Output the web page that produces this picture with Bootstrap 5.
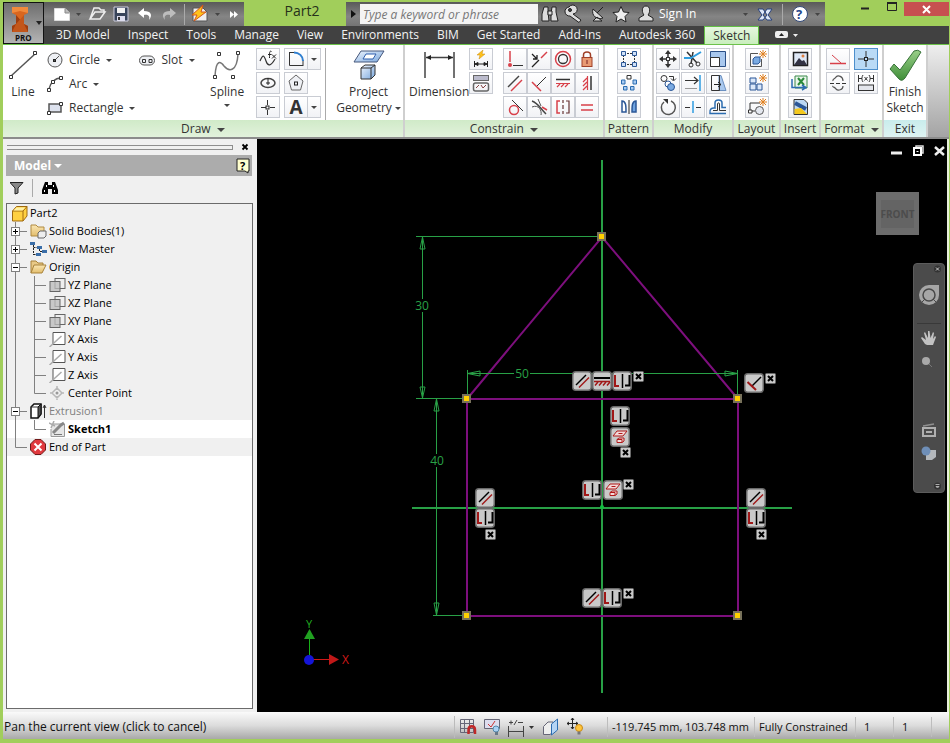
<!DOCTYPE html>
<html lang="en">
<head>
<meta charset="utf-8">
<meta name="viewport" content="width=device-width, initial-scale=1">
<title>Part2</title>
<link href="https://cdn.jsdelivr.net/npm/bootstrap@5.3.0/dist/css/bootstrap.min.css" rel="stylesheet">
<script src="https://cdn.jsdelivr.net/npm/bootstrap@5.3.0/dist/js/bootstrap.bundle.min.js"></script>
<style>
body{background:#a1ce5b;font-family:"Open Sans","Noto Sans",sans-serif;font-size:12px;line-height:16px;color:#333}
button,a.nav-link{font:inherit;color:inherit}
button{border:0;background:none;padding:0}
svg{display:block;flex:none;fill:none}
.win{height:100vh;padding:2px 1px 4px 3px}
.app-btn{width:41px;height:42px;border:1px solid #111;background:linear-gradient(#6e6e6e,#b4b4b4)}
.bar-grey{height:24px;background:linear-gradient(#595959,#858585 60%,#747474);color:#fff}
.title-txt{font-size:14px;line-height:18px;color:#26311a;width:102px;padding-left:14px}
.search-box{width:178px;height:20px;border:0;border-radius:0;padding:2px 3px;font-size:12px;font-style:italic;background:#f4f4f4;color:#777}
.search-box::placeholder{color:#777}
.sign-in{padding:0 2px}
.vline{width:1px;height:18px;background:#aaa}
.close-btn{width:45px;height:14px;background:#c75050}
.tabs{height:18px;background:#414141;color:#f2f2f2}
.tabs .nav-link{padding:0 9px;color:#f2f2f2;line-height:17px}
.tabs .nav-link.active{background:linear-gradient(#e6f6df,#c9eebd);color:#333;border:1px solid #63bf45;border-bottom:0}
.tabs .nav-link:first-child{margin-left:3px}
.ribbon{height:95px;background:linear-gradient(#eee,#a4a4a4);border-top:1px solid #6cc24a;border-bottom:2px solid #8c8c8c}
.pane{background:#fff;border-right:2px solid #cfcfcf;flex:none}
.pane-draw{width:402px}
.pane-constrain{width:200px}
.pane-pattern{width:49px}
.pane-modify{width:80px}
.pane-layout{width:47px}
.pane-insert{width:40px}
.pane-format{width:63px}
.pane-exit{width:44px}
.pane-body{height:75px;padding-top:3px}
.pane-lbl{height:17px;line-height:17px;background:linear-gradient(#d0eac8,#e2f2dc);white-space:nowrap;text-align:center}
.exit-lbl{background:linear-gradient(#c9ecec,#dff4f2)}
.ib{width:24px;height:22px;border:1px solid #c9ccd3;background:linear-gradient(#fff,#f1f2f5);display:flex;align-items:center;justify-content:center}
.ib-split{width:13px;border-left:0}
.ib-on{background:#b9daf6;border-color:#4d8fcc}
.ib-text{font-size:19px}
.ig{display:grid;gap:2px;grid-auto-rows:22px;align-content:start}
.ig2{grid-template-columns:repeat(3,24px);gap:2px 1px}
.ig4{grid-template-columns:repeat(4,24px);gap:2px 0}
.txt-btn{height:24px;display:flex;align-items:center;gap:6px;white-space:nowrap}
.big-btn{display:flex;flex-direction:column;align-items:center;white-space:nowrap;line-height:16px}
.geo-btn{margin:0 2px 0 10px}
.car{border:3px solid transparent;border-top-color:#444;border-bottom:0;display:inline-block;vertical-align:middle}
.car-lg{border-width:4px;border-bottom:0}
.car-white{border-top-color:#fff}
.side{width:254px;background:#f0f0f0;font-size:11px;color:#000}
.grip{height:5px;border:1px solid #8e8e8e;border-left:0}
.model-hd{height:21px;background:#acacac;color:#fff;font-size:12px;padding:0 2px 0 8px;margin:0 5px 0 3px}
.side-tools{height:27px;padding:0 7px 4px}
.tree{background:#fff;border:1px solid #6b6b6b;margin:0 4px 3px 3px}
.tree-row{height:18px;display:flex;align-items:center;background:#f0f0f0;white-space:nowrap}
.tree-row.sel{background:#fff;font-weight:700}
.tree-row.dim{color:#808080}
.gd{width:23px;height:18px}
.gd2{width:19px;height:18px}
.tree-row>.ic{margin-right:2px}
.view{background:#000;border-right:2px solid #e8f0dc}
.view>svg{width:100%;height:100%}
.overlay{position:absolute}
.win-ctl{top:6px;right:2px;gap:10px}
.cube{top:53px;right:28px;width:43px;height:43px;background:#6c6c6c;color:#4c4c4c;font-size:10px;font-weight:700}
.cube span{background:#646464;padding:6px 0}
.navbar-v{top:124px;right:2px;width:32px;height:230px;background:#4b4b4b;border:1px solid #5c5c5c;border-radius:4px}
.status{height:27px;background:linear-gradient(#fafafa,#dcdcdc 50%,#a8a8a8);color:#111;padding:2px 0 0 1px}
.cell{border-left:1px solid #bdbdbd;height:20px;line-height:20px;padding-left:4px;font-size:11px;white-space:nowrap}
.cell-pos{width:147px}
.cell-state{width:101px}
.cell-num{width:38px;padding-left:8px}
.cell-end{width:18px}
</style>
</head>
<body>
<svg width="0" height="0" class="position-absolute" aria-hidden="true">
<defs>
<linearGradient id="gBlue" x2="1" y2="1"><stop stop-color="#eef5ff"/><stop offset="1" stop-color="#7aa7dc"/></linearGradient>
<linearGradient id="gGreen" x2="0" y2="1"><stop stop-color="#9ad089"/><stop offset="1" stop-color="#3f8e38"/></linearGradient>
<linearGradient id="gFold" x2="0" y2="1"><stop stop-color="#fbe7b4"/><stop offset="1" stop-color="#e2bd6c"/></linearGradient>
<symbol id="plus" viewBox="0 0 23 18"><path d="M8.500 0V18M13 9.500H20" stroke="#808080"/><rect x="4.500" y="5.500" width="8" height="8" fill="#fff" stroke="#808080"/><path d="M6 9.500H11M8.500 7V12" stroke="#000"/></symbol>
<symbol id="minus" viewBox="0 0 23 18"><path d="M8.500 0V18M13 9.500H20" stroke="#808080"/><rect x="4.500" y="5.500" width="8" height="8" fill="#fff" stroke="#808080"/><path d="M6 9.500H11" stroke="#000"/></symbol>
<symbol id="vert" viewBox="0 0 23 18"><path d="M8.500 0V18" stroke="#808080"/></symbol>
<symbol id="elbow" viewBox="0 0 23 18"><path d="M8.500 0V9.500H20" stroke="#808080"/></symbol>
<symbol id="tee2" viewBox="0 0 19 18"><path d="M4.500 0V18M5 9.500H16" stroke="#808080"/></symbol>
<symbol id="elbow2" viewBox="0 0 19 18"><path d="M4.500 0V9.500H16" stroke="#808080"/></symbol>
<symbol id="plane" viewBox="0 0 16 16"><rect x="5.500" y="1.500" width="10" height="10" fill="#eee" stroke="#666"/><rect x=".5" y="4.500" width="10" height="10" fill="#bbb" fill-opacity=".75" stroke="#666"/></symbol>
<symbol id="axis" viewBox="0 0 16 16"><path d="M3.500 1.500H15.500V13.500H3.500Z" fill="#fff" stroke="#555"/><path d="M0 16L12 5" stroke="#aaa" stroke-width="1.500"/></symbol>
<symbol id="b-par" viewBox="0 0 20 20"><rect x=".75" y=".75" width="18.500" height="18.500" rx="3" fill="#c9c9c9" stroke="#6a6a6a" stroke-width="1.500"/><path d="M4 14L14 4" stroke="#000" stroke-width="1.500"/><path d="M7 16.500L17 6.500" stroke="#a01818" stroke-width="1.500"/></symbol>
<symbol id="b-sym" viewBox="0 0 20 20"><rect x=".75" y=".75" width="18.500" height="18.500" rx="3" fill="#c9c9c9" stroke="#6a6a6a" stroke-width="1.500"/><path d="M3 4V15H7" stroke="#a01818" stroke-width="2"/><path d="M10.500 3V17" stroke="#000" stroke-width="1.500"/><path d="M17.500 4V14.500H13" stroke="#000" stroke-width="2"/></symbol>
<symbol id="b-hor" viewBox="0 0 20 20"><rect x=".75" y=".75" width="18.500" height="18.500" rx="3" fill="#c9c9c9" stroke="#6a6a6a" stroke-width="1.500"/><path d="M2 7H18" stroke="#000" stroke-width="2"/><path d="M2 10.500H18M6 11L3 14.500M10 11L7 14.500M14 11L11 14.500M18 11L15 14.500" stroke="#a01818" stroke-width="1.500"/></symbol>
<symbol id="b-prp" viewBox="0 0 20 20"><rect x=".75" y=".75" width="18.500" height="18.500" rx="3" fill="#c9c9c9" stroke="#6a6a6a" stroke-width="1.500"/><path d="M8 13L17 4" stroke="#000" stroke-width="1.500"/><path d="M3.500 9L12 17" stroke="#a01818" stroke-width="2"/></symbol>
<symbol id="b-prj" viewBox="0 0 20 20"><rect x=".75" y=".75" width="18.500" height="18.500" rx="3" fill="#c9c9c9" stroke="#6a6a6a" stroke-width="1.500"/><path d="M7 4H17L13 9H3Z" fill="#f3dada" stroke="#b01818"/><path d="M8.500 6.500H12.500" stroke="#b01818"/><path d="M7 12.500L9 11H14V14L12 15.500H7ZM7 12.500H12V15.500" fill="#f3dada" stroke="#b01818"/></symbol>
<symbol id="b-x" viewBox="0 0 11 11"><rect x=".5" y=".5" width="10" height="10" rx="1" fill="#c9c9c9" stroke="#6a6a6a"/><path d="M3 3L8 8M8 3L3 8" stroke="#000" stroke-width="2"/></symbol>
<symbol id="pt" viewBox="0 0 9 9"><rect x="1" y="1" width="7" height="7" fill="#ffd000" stroke="#77715a" stroke-width="2"/></symbol>
<symbol id="burst" viewBox="0 0 8 8"><path d="M4 0V8M0 4H8M1 1L7 7M7 1L1 7" stroke="#e08020"/></symbol>
</defs>
</svg>

<div class="win d-flex flex-column">
<header class="d-flex">
  <button class="app-btn d-flex align-items-center justify-content-center" aria-label="Application menu">
    <svg width="38" height="38" viewBox="0 0 38 38"><path d="M7 3H23V9L19 11V20L23 22V28H7V22L11 20V11L7 9Z" fill="#d9661f"/><path d="M7 3H23V9L15 7L7 9Z" fill="#f08a3c"/><path d="M11 11L19 20L23 22V28H7V22L11 20Z" fill="#9c3d10"/><path d="M11 20L19 11V20L23 28H7Z" fill="#c3561a"/><path d="M31 17H37L34 21Z" fill="#222"/><text x="10" y="37" font-size="8" font-weight="700" fill="#111">PRO</text></svg>
  </button>
  <div class="flex-grow-1 d-flex flex-column">
    <div class="d-flex">
      <div class="bar-grey d-flex align-items-center ps-2">
        <svg width="192" height="24" viewBox="52 2 192 24"><path d="M54.500 8.500H65L69.500 13V20.500H54.500Z" fill="#fff" stroke="#ddd"/><path d="M65 8.500V13H69.500" fill="#bbb" stroke="#888"/><path d="M76 13H81L78.500 16Z" fill="#444"/><path d="M90 19L94 8H99L101 10H104V12M90 19L95 12H105L100 19Z" stroke="#eee" stroke-width="1.500" fill="#777"/><path d="M114 7H128V21H114Z" fill="#38445a" stroke="#ccd"/><path d="M117 8H125V13H117Z" fill="#f2f2f2"/><path d="M117 16H125V21H117Z" fill="#dde"/><path d="M119 17V20" stroke="#333" stroke-width="2"/><path d="M144 8L138 13L144 18V15C149 14 150 17 149 20C153 15 151 11 144 11Z" fill="#fff"/><path d="M170 8L176 13L170 18V15C165 14 164 17 165 20C161 15 163 11 170 11Z" fill="#bdbdbd"/><path d="M184.500 4V25" stroke="#aaa"/><path d="M193 8H203L207 12V21H193Z" fill="#eee" stroke="#555"/><path d="M203 5L192 15H197L194 21L206 12H201Z" fill="#ffc21a" stroke="#d1571a"/><path d="M215 13H220L217.500 16Z" fill="#444"/><path d="M230 11L234 14.500L230 18ZM234 11L238 14.500L234 18Z" fill="#fff"/></svg>
      </div>
      <div class="title-txt text-center">Part2</div>
      <div class="bar-grey d-flex align-items-center">
        <button class="px-1" aria-label="Collapse search"><svg width="6" height="10"><path d="M1 1L6 5L1 9Z" fill="#111"/></svg></button>
        <input class="search-box" aria-label="Search" placeholder="Type a keyword or phrase">
        <svg width="119" height="24" viewBox="539 2 119 24"><g fill="#ddd" stroke="#222"><path d="M545 7H549V12L550 21H543V14ZM553 7H557V12L559 21H552V14Z"/><path d="M549 11H553V15H549Z"/><path d="M570 7A4.500 4.500 0 1 1 574 14L582 20L580 22.500L571 16A4.500 4.500 0 0 1 570 7Z"/><circle cx="571" cy="10" r="1.500" fill="#444"/><path d="M594 9L604 18C598 20 592 16 594 9ZM598 13L604 7M594 21H603L598 17Z"/><path d="M622 6.500L624.500 12L630 12.500L626 16.500L627 22L622 19L617 22L618 16.500L614 12.500L619.500 12Z" fill="#eee"/><path d="M647 6C652 6 651 13 649 15L654 18V21H640V18L645 15C643 13 642 6 647 6Z" fill="#ddd"/></g></svg>
        <button class="sign-in text-white">Sign In</button>
        <svg width="127" height="24" viewBox="700 2 127 24"><path d="M745 13H750L747.500 16Z" fill="#444"/><path d="M760 9H765L769 15L765 20H760L764 15ZM774 9H769L765 15L769 20H774L770 15Z" fill="#dfe8f8" stroke="#27407c"/><path d="M784.500 4V25" stroke="#aaa"/><circle cx="802" cy="14" r="7.500" fill="#fff" stroke="#334a7a"/><text x="798" y="19" font-size="13" font-weight="700" fill="#24468c">?</text><path d="M817 13H822L819.500 16Z" fill="#444"/></svg>
      </div>
      <div class="flex-grow-1 d-flex justify-content-end align-items-start">
        <svg width="43" height="14" viewBox="0 0 43 14"><path d="M0 6.500H8" stroke="#222" stroke-width="2"/><path d="M26.500 .5H35.500V8.500H26.500Z" stroke="#222"/><path d="M26 1H36" stroke="#222" stroke-width="2"/></svg>
        <button class="close-btn d-flex align-items-center justify-content-center" aria-label="Close"><svg width="9" height="9"><path d="M1 1L8 8M8 1L1 8" stroke="#fff" stroke-width="2"/></svg></button>
      </div>
    </div>
    <nav class="tabs nav flex-nowrap" aria-label="Ribbon">
      <a class="nav-link" href="#">3D Model</a><a class="nav-link" href="#">Inspect</a><a class="nav-link" href="#">Tools</a><a class="nav-link" href="#">Manage</a><a class="nav-link" href="#">View</a><a class="nav-link" href="#">Environments</a><a class="nav-link" href="#">BIM</a><a class="nav-link" href="#">Get Started</a><a class="nav-link" href="#">Add-Ins</a><a class="nav-link" href="#">Autodesk 360</a><a class="nav-link active px-2" href="#">Sketch</a>
      <svg class="ms-3" width="24" height="18"><rect x="0" y="5" width="13" height="7" rx="2" fill="#eee"/><path d="M4 10H9L6.500 7Z" fill="#222"/><path d="M18 8H23L20.500 11Z" fill="#eee"/></svg>
    </nav>
  </div>
</header>

<section class="ribbon d-flex" aria-label="Sketch tools">
  <div class="pane pane-draw">
    <div class="pane-body d-flex">
      <button class="big-btn ms-1"><svg width="32" height="36" viewBox="8 48 32 36"><path d="M12 76L36 54" stroke="#555" stroke-width="1.500"/><path d="M10.500 75.500H13.500V78.500H10.500ZM34.500 51.500H37.500V54.500H34.500Z" fill="#fff" stroke="#333"/></svg>Line</button>
      <div class="ms-2">
        <button class="txt-btn"><svg width="16" height="16"><circle cx="8" cy="8" r="7" fill="#eef0f4" stroke="#555"/><path d="M7 9L12 4" stroke="#555"/><rect x="6.500" y="7.500" width="2" height="2" stroke="#222"/></svg>Circle <i class="car"></i></button>
        <button class="txt-btn"><svg width="16" height="16"><path d="M2 13C3 7 8 2 14 2" stroke="#555" stroke-width="1.500"/><path d="M.5 12.500H3.500V15.500H.5ZM4.500 4.500H7.500V7.500H4.500ZM12.500 .5H15.500V3.500H12.500Z" fill="#fff" stroke="#333"/></svg>Arc <i class="car"></i></button>
        <button class="txt-btn"><svg width="16" height="16"><path d="M2 4H14V12H2Z" fill="#dde2ee" stroke="#555" stroke-width="1.500"/><path d="M.5 11.500H3.500V14.500H.5ZM12.500 2.500H15.500V5.500H12.500Z" fill="#fff" stroke="#333"/></svg>Rectangle <i class="car"></i></button>
      </div>
      <div><button class="txt-btn ms-1"><svg width="16" height="16"><rect x=".5" y="4" width="15" height="9" rx="4.500" fill="#eef0f4" stroke="#555"/><path d="M3.500 7.500H6.500V10.500H3.500ZM10 7.500H13V10.500H10Z" stroke="#333"/></svg>Slot <i class="car"></i></button></div>
      <button class="big-btn ms-auto"><svg width="32" height="36" viewBox="211 48 32 36"><path d="M215 76C216 58 221 62 224 66C229 72 237 72 238 54" stroke="#777" stroke-width="1.500"/><path d="M213.500 75.500H216.500V78.500H213.500ZM217.500 52.500H220.500V55.500H217.500ZM231.500 75.500H234.500V78.500H231.500ZM236.500 51.500H239.500V54.500H236.500Z" fill="#fff" stroke="#333"/></svg>Spline<i class="car mt-1"></i></button>
      <div class="ig ms-2 ps-1">
        <div class="d-flex"><button class="ib" aria-label="Equation curve"><svg width="20" height="18"><path d="M2 11C5 4 6 5 8 11S13 16 17 9" stroke="#333" stroke-width="1.200"/><path d="M13.500 1.500C11.500 .5 11.500 2 11.500 8M10 4.500H13.500M14 4.500L18 8.500M18 4.500L14 8.500" stroke="#222"/></svg></button><button class="ib ms-1" aria-label="Fillet"><svg width="20" height="18"><path d="M3.500 2V15.500H17M3 2.500H8M17 10V16" stroke="#333"/><path d="M8 2.500C13 2.500 17 6 17 11" stroke="#2f7fd0" stroke-width="2"/></svg></button><button class="ib ib-split" aria-label="More fillets"><i class="car"></i></button></div>
        <div class="d-flex"><button class="ib" aria-label="Ellipse"><svg width="20" height="18"><ellipse cx="10" cy="9" rx="7" ry="4.500" stroke="#444" stroke-width="1.500"/><path d="M8 9H12M10 4V11" stroke="#222"/></svg></button><button class="ib ms-1" aria-label="Polygon"><svg width="20" height="18"><path d="M10 1L17 7L14.500 16H5.500L3 7Z" fill="#eef0f4" stroke="#666"/><rect x="8.500" y="8" width="3" height="3" stroke="#222"/></svg></button></div>
        <div class="d-flex"><button class="ib" aria-label="Point"><svg width="20" height="18"><path d="M3 9.500H8M12 9.500H17M9.500 2V7M9.500 12V17" stroke="#333"/><rect x="8" y="8" width="3" height="3" stroke="#222"/></svg></button><button class="ib ib-text ms-1 fw-bold">A</button><button class="ib ib-split" aria-label="More text"><i class="car"></i></button></div>
      </div>
      <div class="vline ms-1 h-100"></div>
      <button class="big-btn geo-btn"><svg width="34" height="36" viewBox="0 0 34 36"><path d="M9 3H32L25 14H2Z" fill="url(#gBlue)" stroke="#46587c"/><path d="M14 6H24L21 11H11Z" fill="#fff" stroke="#2f5fae"/><path d="M9 20L13 17H23V27L19 31H9ZM9 20H19V31M19 20L23 17" fill="url(#gBlue)" stroke="#333"/></svg>Project<span>Geometry <i class="car"></i></span></button>
    </div>
    <div class="pane-lbl">Draw &nbsp;<i class="car car-lg"></i></div>
  </div>
  <div class="pane pane-constrain">
    <div class="pane-body d-flex">
      <button class="big-btn ms-1"><svg width="34" height="36" viewBox="0 0 34 36"><path d="M3 4V30M32 4V30M4 9.500H31" stroke="#444" stroke-width="1.500"/><path d="M4 9.500L9 7V12ZM31 9.500L26 7V12Z" fill="#222"/></svg>Dimension</button>
      <div class="ig">
        <button class="ib" aria-label="Auto dimension"><svg width="20" height="18"><path d="M12 0L6 5H9L8 9L14 4H11Z" fill="#ffc21a" stroke="#c98a10" stroke-width=".5"/><path d="M3.500 11V17M16.500 11V17M4 14H16M4 14L7 12.500V15.500ZM16 14L13 12.500V15.500Z" fill="#222" stroke="#222"/></svg></button>
        <button class="ib" aria-label="Show constraints"><svg width="20" height="18"><rect x="2.500" y="1.500" width="15" height="5" fill="#bbc" stroke="#666"/><rect x="2.500" y="9" width="15" height="8" rx="2" stroke="#666" stroke-width="1.500"/><path d="M5 14L8 11M10 11L12 14L15 11" stroke="#844"/></svg></button>
      </div>
      <div class="ig ig4 ms-auto me-1">
        <button class="ib" aria-label="Coincident"><svg width="20" height="18"><path d="M5 1V12" stroke="#d8404a" stroke-width="1.500"/><path d="M8 15.500H18" stroke="#333"/><circle cx="5" cy="15" r="2" fill="#d8404a"/></svg></button>
        <button class="ib" aria-label="Collinear"><svg width="20" height="18"><path d="M3 17L10 10M3 4L8 9M8 5V9H4" stroke="#222" stroke-width="1.300"/><path d="M12 8L18 2" stroke="#d8404a" stroke-width="1.500"/></svg></button>
        <button class="ib" aria-label="Concentric"><svg width="20" height="18"><circle cx="10" cy="9" r="7.500" stroke="#d8404a" stroke-width="1.500"/><circle cx="10" cy="9" r="4.500" stroke="#333" stroke-width="1.300"/></svg></button>
        <button class="ib" aria-label="Fix"><svg width="20" height="18"><path d="M6.500 8V5C6.500 1 13.500 1 13.500 5V8" stroke="#a04028" stroke-width="1.500"/><rect x="5" y="7.500" width="10" height="9" fill="#e89a74" stroke="#a04028"/><path d="M10 10V14" stroke="#722"/></svg></button>
        <button class="ib" aria-label="Parallel"><svg width="20" height="18"><path d="M3 13L14 2" stroke="#444" stroke-width="1.500"/><path d="M6 17L17 6" stroke="#d8404a" stroke-width="1.500"/></svg></button>
        <button class="ib" aria-label="Perpendicular"><svg width="20" height="18"><path d="M8 12L17 3" stroke="#333"/><path d="M3 8L12 17" stroke="#d8404a" stroke-width="1.500"/></svg></button>
        <button class="ib" aria-label="Horizontal"><svg width="20" height="18"><path d="M3 5.500H17" stroke="#333" stroke-width="1.500"/><path d="M3 9.500H17M7 10L4 13M11 10L8 13M15 10L12 13" stroke="#d8404a" stroke-width="1.200"/></svg></button>
        <button class="ib" aria-label="Vertical"><svg width="20" height="18"><path d="M14 2V16" stroke="#333" stroke-width="1.500"/><path d="M10.500 2V16M10 4L6 8M10 8L6 12M10 12L6 16" stroke="#d8404a" stroke-width="1.200"/></svg></button>
        <button class="ib" aria-label="Tangent"><svg width="20" height="18"><circle cx="9" cy="12" r="4.500" stroke="#d8404a" stroke-width="1.500"/><path d="M7 2L18 13" stroke="#333"/></svg></button>
        <button class="ib" aria-label="Smooth"><svg width="20" height="18"><path d="M3 3C9 5 11 10 17 16" stroke="#444" stroke-width="1.500"/><path d="M3 9C10 6 13 13 12 17M9 1L12 8" stroke="#555"/><path d="M13 9L18 12" stroke="#d8404a" stroke-width="1.500"/></svg></button>
        <button class="ib" aria-label="Symmetric"><svg width="20" height="18"><path d="M7 3H4V15H7" stroke="#d8404a" stroke-width="1.500"/><path d="M10 2V5M10 7V11M10 13V16M13 3H16V15H13" stroke="#633" stroke-width="1.200"/></svg></button>
        <button class="ib" aria-label="Equal"><svg width="20" height="18"><path d="M4 7H16M4 12H16" stroke="#d8404a" stroke-width="1.500"/></svg></button>
      </div>
    </div>
    <div class="pane-lbl">Constrain &nbsp;<i class="car car-lg"></i></div>
  </div>
  <div class="pane pane-pattern">
    <div class="pane-body ig justify-content-center">
      <button class="ib" aria-label="Rectangular pattern"><svg width="20" height="18"><path d="M5 3.500H15M5 14.500H15M4.500 5V13M15.500 5V13" stroke="#333" stroke-dasharray="2 1"/><path d="M2.500 1.500H6.500V5.500H2.500ZM13.500 1.500H17.500V5.500H13.500ZM2.500 12.500H6.500V16.500H2.500ZM13.500 12.500H17.500V16.500H13.500Z" fill="#cfe0f7" stroke="#2b5797"/></svg></button>
      <button class="ib" aria-label="Circular pattern"><svg width="20" height="18"><path d="M8 1.500H12V5H8Z" fill="#fff" stroke="#333"/><path d="M2.500 6H6V10H2.500ZM14 6H17.500V10H14ZM4.500 12.500H8V16H4.500ZM11.500 12.500H15V16H11.500Z" fill="#a9cbf2" stroke="#2b6cb0"/></svg></button>
      <button class="ib" aria-label="Mirror"><svg width="20" height="18"><path d="M3 3C7 3 7 8 7 14H3Z" fill="#fff" stroke="#2b5797" stroke-width="1.500"/><path d="M10 2V16" stroke="#222"/><path d="M17 3C13 3 13 8 13 14H17Z" fill="#6fa3e0" stroke="#2b5797" stroke-width="1.500"/></svg></button>
    </div>
    <div class="pane-lbl">Pattern</div>
  </div>
  <div class="pane pane-modify">
    <div class="pane-body ig ig2 justify-content-center">
      <button class="ib" aria-label="Move"><svg width="20" height="18"><path d="M10 0L13 4H7ZM10 18L13 14H7ZM1 9L5 6V12ZM19 9L15 6V12Z" fill="#333"/><path d="M10 4V7M10 11V14M5 9H8M12 9H15" stroke="#333" stroke-width="1.500"/><rect x="8.500" y="7.500" width="3" height="3" stroke="#333"/></svg></button>
      <button class="ib" aria-label="Trim"><svg width="20" height="18"><path d="M4 2L14 13M10 2L8 14" stroke="#333" stroke-width="1.500"/><circle cx="15" cy="14" r="2" stroke="#333"/><circle cx="8" cy="15" r="2" stroke="#333"/><path d="M1 8H8L18 2" stroke="#2f9de0" stroke-width="2"/></svg></button>
      <button class="ib" aria-label="Scale"><svg width="20" height="18"><path d="M2.500 1.500H17.500V16.500H2.500Z" fill="#a9c8ee" stroke="#2b4f86"/><path d="M2.500 7.500H11.500V16.500H2.500Z" fill="#fff" stroke="#333"/></svg></button>
      <button class="ib" aria-label="Copy"><svg width="20" height="18"><circle cx="6" cy="4.500" r="3" stroke="#333"/><circle cx="10" cy="10" r="3" fill="#fff" stroke="#2b5797"/><circle cx="13" cy="13" r="3.500" fill="#7aaae2" stroke="#2b5797"/><path d="M11 2.500H15.500V6M13 4.500L15.500 7L18 4.500" stroke="#333"/></svg></button>
      <button class="ib" aria-label="Extend"><svg width="20" height="18"><path d="M2 6.500H14M11 3L15 6.500L11 10" stroke="#333" stroke-width="1.200"/><path d="M17 1V17" stroke="#2f9de0" stroke-width="1.500"/><path d="M2 14.500H14" stroke="#999"/></svg></button>
      <button class="ib" aria-label="Stretch"><svg width="20" height="18"><path d="M11 1.500H13L18 16.500H11Z" fill="#a9c8ee" stroke="#6a8fc0"/><path d="M3.500 1.500H11.500V16.500H3.500Z" stroke="#333"/><path d="M6 10.500H13M10 8L13 10.500L10 13" stroke="#222"/></svg></button>
      <button class="ib" aria-label="Rotate"><svg width="20" height="18"><path d="M6 4A7 7 0 1 0 13 3" stroke="#555" stroke-width="1.500"/><path d="M5 1H10V6Z" fill="#333"/></svg></button>
      <button class="ib" aria-label="Split"><svg width="20" height="18"><path d="M2 9.500H7M13 9.500H18" stroke="#333" stroke-width="1.200"/><path d="M10 3V15" stroke="#2f9de0" stroke-width="1.500"/></svg></button>
      <button class="ib" aria-label="Offset"><svg width="20" height="18"><path d="M18 15.500H2C1 11 4 9.500 7 10V5C7 1 14 1 14 5V9.500H18" stroke="#2b6cb0" stroke-width="1.500"/><path d="M18 12.500H11.500V6C11.500 4.500 9.500 4.500 9.500 6V12.500H5" stroke="#333"/></svg></button>
    </div>
    <div class="pane-lbl">Modify</div>
  </div>
  <div class="pane pane-layout">
    <div class="pane-body ig justify-content-center">
      <button class="ib" aria-label="Make part"><svg width="20" height="18"><path d="M11 3.500H3.500V16.500H14.500V9" stroke="#555"/><path d="M6 9L8 7H13V12L11 14H6Z" fill="#7aaae2" stroke="#2b5797"/><use href="#burst" x="12" y="0" width="8" height="8"/></svg></button>
      <button class="ib" aria-label="Make components"><svg width="20" height="18"><path d="M3 4H9V9H3ZM3 10H9V16H3ZM10 10H15V16H10Z" fill="#dbe8fa" stroke="#2b5797"/><use href="#burst" x="12" y="0" width="8" height="8"/></svg></button>
      <button class="ib" aria-label="Create block"><svg width="20" height="18"><path d="M13 5H3V13H8" stroke="#333"/><circle cx="12.500" cy="12.500" r="4" fill="#e4e8f0" stroke="#555"/><path d="M1.500 12H5V15H1.500Z" fill="#fff" stroke="#333"/><use href="#burst" x="12" y="0" width="8" height="8"/></svg></button>
    </div>
    <div class="pane-lbl">Layout</div>
  </div>
  <div class="pane pane-insert">
    <div class="pane-body ig justify-content-center">
      <button class="ib" aria-label="Image"><svg width="20" height="18"><rect x="3.500" y="2.500" width="14" height="13" fill="#dfe8f6" stroke="#222" stroke-width="1.500"/><path d="M4 15L9 8L12 11L14 10L17 15Z" fill="#334"/><circle cx="13" cy="6" r="1.500" fill="#e08040"/></svg></button>
      <button class="ib" aria-label="Points"><svg width="20" height="18"><path d="M5 2H17V14H5Z" fill="#e9f5ea" stroke="#3a8a4a"/><path d="M8 4L14 11M14 4L8 11" stroke="#2b8a3a" stroke-width="2"/><path d="M2 5V13.500H15M12 11L16 13.500L12 16" stroke="#2b6cb0" stroke-width="1.500"/></svg></button>
      <button class="ib" aria-label="ACAD file"><svg width="20" height="18"><path d="M4 1.500H14L17.500 5V16.500H4Z" fill="#bcd8f4" stroke="#333"/><path d="M5 5L16 11" stroke="#2b5797" stroke-width="4"/><path d="M4.500 16V11L11 10L17 16Z" fill="#f4c81e"/></svg></button>
    </div>
    <div class="pane-lbl">Insert</div>
  </div>
  <div class="pane pane-format">
    <div class="pane-body d-flex justify-content-center gap-1">
      <div class="ig"><button class="ib" aria-label="Construction"><svg width="20" height="18"><path d="M2 13.500H18" stroke="#d8404a" stroke-width="1.500"/><path d="M4 5L13 13" stroke="#d8404a"/></svg></button><button class="ib" aria-label="Centerline"><svg width="20" height="18"><path d="M2 9.500H6M8 9.500H12M14 9.500H18" stroke="#333"/><path d="M5 7C4 5 7 5 8 3C10 1 15 2 15 7M5 12C4 13 7 13 8 15C10 17 15 16 15 12" stroke="#555" stroke-width="1.200"/></svg></button></div>
      <div class="ig"><button class="ib ib-on" aria-label="Center point"><svg width="20" height="18"><path d="M2 9H8M12 9H18M10 1V7M10 11V17" stroke="#333"/><rect x="8.500" y="7.500" width="3" height="3" stroke="#222"/></svg></button><button class="ib" aria-label="Driven dimension"><svg width="20" height="18"><path d="M2.500 1V8M17.500 1V8M3 4.500H6M14 4.500H17M7 1C5.500 3 5.500 6 7 8M13 1C14.500 3 14.500 6 13 8M8.500 3L11.500 6.500M11.500 3L8.500 6.500" stroke="#333"/><rect x="2.500" y="11" width="15" height="5.500" fill="#e4e6ec" stroke="#333"/></svg></button></div>
    </div>
    <div class="pane-lbl">Format &nbsp;<i class="car car-lg"></i></div>
  </div>
  <div class="pane pane-exit">
    <div class="pane-body">
      <button class="big-btn w-100"><svg width="34" height="36" viewBox="0 0 34 36"><path d="M2 21L6 16L12 22L26 3Q30 1 33 4L17 30Q14 34 11 31Z" fill="url(#gGreen)" stroke="#39733a"/></svg>Finish<span>Sketch</span></button>
    </div>
    <div class="pane-lbl exit-lbl">Exit</div>
  </div>
</section>

<main class="d-flex flex-grow-1 overflow-hidden">
  <aside class="side flex-shrink-0 d-flex flex-column">
    <div class="d-flex align-items-center px-1 gap-1"><div class="grip flex-grow-1"></div><button class="p-1" aria-label="Close panel"><svg width="8" height="8"><path d="M1.500 1.500L6.500 6.500M6.500 1.500L1.500 6.500" stroke="#000" stroke-width="1.800"/></svg></button></div>
    <div class="model-hd d-flex align-items-center justify-content-between"><b>Model <i class="car car-lg car-white"></i></b><button aria-label="Help"><svg width="14" height="16"><path d="M1 1H13V13H12V15L9 13H1Z" fill="#ffffd0" stroke="#222"/><text x="4" y="12" font-size="11" font-weight="700" fill="#000">?</text></svg></button></div>
    <div class="side-tools d-flex align-items-center"><button aria-label="Filter"><svg width="14" height="14"><path d="M0 1.500H13L8 7V12L5 13V7Z" fill="#888" stroke="#222"/></svg></button><div class="vline mx-2"></div><button aria-label="Find"><svg width="18" height="14"><path d="M4 1H7V4H11V1H14L17 9V13H11V8H7V13H1V9Z" fill="#000"/><path d="M3.500 9V11M13.500 9V11M5.500 4V6M12.500 4V6" stroke="#fff"/></svg></button></div>
    <div class="tree flex-grow-1">
      <div class="tree-row ps-1"><svg class="ic" width="17" height="17" viewBox="0 0 17 17"><path d="M1.500 6L5.500 1.500H16V11L12 16H1.500Z" fill="#ffd040" stroke="#a06a10"/><path d="M1.500 6H12V16M12 6L16 1.500" stroke="#a06a10"/><path d="M2.500 5.500L5.500 2.500H14.500L11.500 5.500Z" fill="#fff1a8"/></svg>Part2</div>
      <div class="tree-row"><svg class="gd"><use href="#plus"/></svg><svg class="ic" width="17" height="16"><path d="M1 13V2H6L8 4H14V13Z" fill="url(#gFold)" stroke="#b08a40"/><path d="M8 10L10 8H16V13L14 15H8Z" fill="#eee" stroke="#666"/></svg>Solid Bodies(1)</div>
      <div class="tree-row"><svg class="gd"><use href="#plus"/></svg><svg class="ic" width="17" height="16"><path d="M3.500 4V14M3.500 6.500H7M3.500 13.500H7M9.500 8V10.500H13" stroke="#222" stroke-dasharray="2 1"/><path d="M0 1H5V4H0ZM7 5H12V8H7ZM12 9H17V12H12ZM6 12H11V15H6Z" fill="#3a6ea8"/></svg>View: Master</div>
      <div class="tree-row"><svg class="gd"><use href="#minus"/></svg><svg class="ic" width="17" height="16"><path d="M1 14V2H6L8 4H13V6" fill="#e8c987" stroke="#a8823a"/><path d="M1 14L4 6H16L12 14Z" fill="url(#gFold)" stroke="#a8823a"/></svg>Origin</div>
      <div class="tree-row"><svg class="gd"><use href="#vert"/></svg><svg class="gd2"><use href="#tee2"/></svg><svg class="ic" width="17" height="16"><use href="#plane"/></svg>YZ Plane</div>
      <div class="tree-row"><svg class="gd"><use href="#vert"/></svg><svg class="gd2"><use href="#tee2"/></svg><svg class="ic" width="17" height="16"><use href="#plane"/></svg>XZ Plane</div>
      <div class="tree-row"><svg class="gd"><use href="#vert"/></svg><svg class="gd2"><use href="#tee2"/></svg><svg class="ic" width="17" height="16"><use href="#plane"/></svg>XY Plane</div>
      <div class="tree-row"><svg class="gd"><use href="#vert"/></svg><svg class="gd2"><use href="#tee2"/></svg><svg class="ic" width="17" height="16"><use href="#axis"/></svg>X Axis</div>
      <div class="tree-row"><svg class="gd"><use href="#vert"/></svg><svg class="gd2"><use href="#tee2"/></svg><svg class="ic" width="17" height="16"><use href="#axis"/></svg>Y Axis</div>
      <div class="tree-row"><svg class="gd"><use href="#vert"/></svg><svg class="gd2"><use href="#tee2"/></svg><svg class="ic" width="17" height="16"><use href="#axis"/></svg>Z Axis</div>
      <div class="tree-row"><svg class="gd"><use href="#vert"/></svg><svg class="gd2"><use href="#elbow2"/></svg><svg class="ic" width="17" height="16"><path d="M8 3L13 8L8 13L3 8ZM8 1V5M8 11V15M1 8H4M12 8H15" stroke="#b8b8b8" stroke-width="1.500"/><circle cx="8" cy="8" r="1.500" fill="#999"/></svg>Center Point</div>
      <div class="tree-row dim"><svg class="gd"><use href="#minus"/></svg><svg class="ic" width="17" height="16"><path d="M1 4L4 1H11V11L8 15H1Z" fill="#fff" stroke="#111" stroke-width="1.500"/><path d="M8 4L11 1V11L8 15Z" fill="#555" stroke="#111"/><path d="M1 4H8M14.500 15V2M13 5L14.500 2L16 5" stroke="#333"/></svg>Extrusion1</div>
      <div class="tree-row sel"><svg class="gd"><use href="#vert"/></svg><svg class="gd2"><use href="#elbow2"/></svg><svg class="ic" width="17" height="16"><path d="M4 3H15.500V15.500H2V8" fill="#e6e6e6" stroke="#999"/><path d="M4 12L12 4L15 2" stroke="#888" stroke-width="3"/><path d="M0 2L6 5M5 0L2 7" stroke="#aaa" stroke-width="1.500"/><path d="M5 13.500H13" stroke="#777"/></svg>Sketch1</div>
      <div class="tree-row"><svg class="gd"><use href="#elbow"/></svg><svg class="ic" width="17" height="16"><path d="M5 .5H11L15.500 5V11L11 15.500H5L.5 11V5Z" fill="#e0393e" stroke="#701818"/><path d="M4.500 4.500L11.500 11.500M11.500 4.500L4.500 11.500" stroke="#fff" stroke-width="2"/></svg>End of Part</div>
    </div>
  </aside>

  <section class="view flex-grow-1 position-relative" aria-label="Sketch view">
    <svg viewBox="257 139 690 573" font-family="Open Sans" font-size="12">
      <g stroke="#28a046" stroke-width="2"><path d="M602 160V693M412 508H792"/></g>
      <circle cx="602" cy="507" r="2" fill="#10c040"/>
      <g stroke="#7d0f7d" stroke-width="2"><path d="M467 399L602 237L738 399M467 399H738M467 616H738M467 399V616M738 399V616"/></g>
      <g stroke="#28a046"><path d="M416 236.500H602M422.500 237V299M422.500 312V398M416 398.500H467M436.500 399V454M436.500 467V615M433 615.500H467M467.500 370V399M737.500 370V399M467 373.500H514M530 373.500H737"/>
      <path d="M422.500 237L420 249H425ZM422.500 398L420 387H425ZM436.500 399L434 411H439ZM436.500 615L434 603H439ZM467.500 373.500L480 371V376ZM737.500 373.500L725 371V376Z"/></g>
      <g fill="#28a046" text-anchor="middle"><text x="422" y="310">30</text><text x="437" y="465">40</text><text x="522" y="378">50</text></g>
      <use href="#pt" x="597" y="232" width="9" height="9"/><use href="#pt" x="462" y="394" width="9" height="9"/><use href="#pt" x="733" y="394" width="9" height="9"/><use href="#pt" x="462" y="611" width="9" height="9"/><use href="#pt" x="733" y="611" width="9" height="9"/>
      <use href="#b-par" x="572" y="371" width="20" height="20"/><use href="#b-hor" x="592" y="371" width="20" height="20"/><use href="#b-sym" x="612" y="371" width="20" height="20"/><use href="#b-x" x="633" y="371" width="11" height="11"/>
      <use href="#b-prp" x="744" y="373" width="20" height="20"/><use href="#b-x" x="765" y="373" width="11" height="11"/>
      <use href="#b-sym" x="610" y="406" width="20" height="20"/><use href="#b-prj" x="610" y="427" width="20" height="20"/><use href="#b-x" x="620" y="447" width="11" height="11"/>
      <use href="#b-sym" x="582" y="480" width="20" height="20"/><use href="#b-prj" x="603" y="480" width="20" height="20"/><use href="#b-x" x="623" y="479" width="11" height="11"/>
      <use href="#b-par" x="475" y="488" width="20" height="20"/><use href="#b-sym" x="475" y="508" width="20" height="20"/><use href="#b-x" x="485" y="529" width="11" height="11"/>
      <use href="#b-par" x="746" y="488" width="20" height="20"/><use href="#b-sym" x="746" y="508" width="20" height="20"/><use href="#b-x" x="756" y="529" width="11" height="11"/>
      <use href="#b-par" x="582" y="588" width="20" height="20"/><use href="#b-sym" x="602" y="588" width="20" height="20"/><use href="#b-x" x="623" y="588" width="11" height="11"/>
      <path d="M309.500 655V638" stroke="#18b018"/><path d="M309.500 629L304 639H315Z" fill="#20a020"/><path d="M312 659.500H331" stroke="#d01818"/><path d="M339 659.500L329 654V665Z" fill="#c01818"/><circle cx="309" cy="660" r="5" fill="#1414d8"/>
      <text x="306" y="628" font-size="11" fill="#20b020">Y</text><text x="342" y="664" font-size="12" fill="#d01818">X</text>
    </svg>
    <div class="overlay win-ctl d-flex align-items-center">
      <svg width="11" height="12"><path d="M0 8H11" stroke="#eee" stroke-width="3"/></svg>
      <svg width="12" height="12"><path d="M4 3V1H11V8H9" stroke="#ddd" stroke-width="1.500"/><rect x="2" y="3" width="7" height="7" stroke="#fff" stroke-width="2"/><path d="M4.500 6.500H6.500" stroke="#fff"/></svg>
      <svg width="11" height="12"><path d="M1 2L10 10M10 2L1 10" stroke="#eee" stroke-width="2.500"/></svg>
    </div>
    <div class="overlay cube d-flex align-items-center justify-content-center"><span>FRONT</span></div>
    <div class="overlay navbar-v" aria-label="Navigation bar">
      <svg width="30" height="228" viewBox="914 264 30 228"><circle cx="937.500" cy="269" r="3.500" fill="#333"/><path d="M936 267.500L939 270.500M939 267.500L936 270.500" stroke="#ccc"/><path d="M919 295A10 10 0 0 1 929 285H939V295A10 10 0 0 1 919 295Z" fill="#a6a6a6"/><circle cx="929" cy="295" r="6" fill="#a6a6a6" stroke="#484848" stroke-width="1.500"/><path d="M925 299L922 302M933 299L936 302" stroke="#484848"/><path d="M917 323.500H941" stroke="#393939"/><path d="M925 344L921 338L922 337L926 340L924 333L925 332L928 338L928 331H929.500L930.500 338L933 332L934 333L933 339L935 336L936 337L933 345H927Z" fill="#c2c2c2"/><circle cx="926" cy="361" r="4" fill="#a9a9a9"/><path d="M929 364L932 367" stroke="#777"/><rect x="923" y="428" width="12" height="8" stroke="#b0b0b0" stroke-width="2"/><path d="M926 432H932" stroke="#b0b0b0" stroke-width="2"/><path d="M923 426L934 424" stroke="#909090" stroke-width="1.500"/><path d="M928 450H936V457L932 460H926V454Z" fill="#b4b8bc"/><circle cx="926" cy="451" r="4.500" fill="#6f8fb8"/><circle cx="937.500" cy="486" r="3.500" fill="#333"/><path d="M935.500 484.500H939.500M936 486.500H939L937.500 488Z" stroke="#ccc" stroke-width=".8"/></svg>
    </div>
  </section>
</main>

<footer class="status d-flex align-items-center">
  <span class="flex-grow-1">Pan the current view (click to cancel)</span>
  <svg width="153" height="24" viewBox="453 714 153 24"><path d="M453.500 715V737" stroke="#bbb"/><path d="M459.500 718.500H472.500V731.500H459.500ZM463.500 718.500V731.500M468.500 718.500V731.500M459.500 722.500H472.500M459.500 727.500H472.500" stroke="#667"/><path d="M467.500 733V729C467.500 724 474 724 474 729V733" stroke="#c02828" stroke-width="2.500"/><path d="M483.500 718.500H498.500V727.500H483.500Z" fill="#dde" stroke="#667"/><path d="M487 723L490 726L494 720" stroke="#c33"/><circle cx="495" cy="728" r="3" fill="#a9d0f4" stroke="#58a"/><path d="M494 731H497V734H494Z" fill="#678"/><path d="M507.500 725V736M522.500 725V736M508 730.500H522M508 721.500H512M510 719.500V723.500M513 724L516 719M517 721.500H522" stroke="#444"/><path d="M528 725H533L530.500 728Z" fill="#333"/><path d="M542.500 725.500L547 721H552V731L549 733.500H542.500Z" fill="#eee" stroke="#667"/><path d="M550.500 723L556.500 718V729L550.500 734Z" fill="#b4d4f4" stroke="#2b6cb0"/><path d="M571.500 717V728M566 722.500H577M570 719L571.500 717L573 719M570 726L571.500 728L573 726M568 721L566 722.500L568 724M575 721L577 722.500L575 724" stroke="#222"/><circle cx="578" cy="727" r="3.500" fill="#ffc43a" stroke="#c88a18"/><path d="M576.500 730.500H579.500V733.500H576.500Z" fill="#777"/></svg>
  <span class="cell cell-pos">-119.745 mm, 103.748 mm</span>
  <span class="cell cell-state">Fully Constrained</span>
  <span class="cell cell-num">1</span>
  <span class="cell cell-num">1</span>
  <span class="cell cell-end"></span>
</footer>
</div>
</body>
</html>
